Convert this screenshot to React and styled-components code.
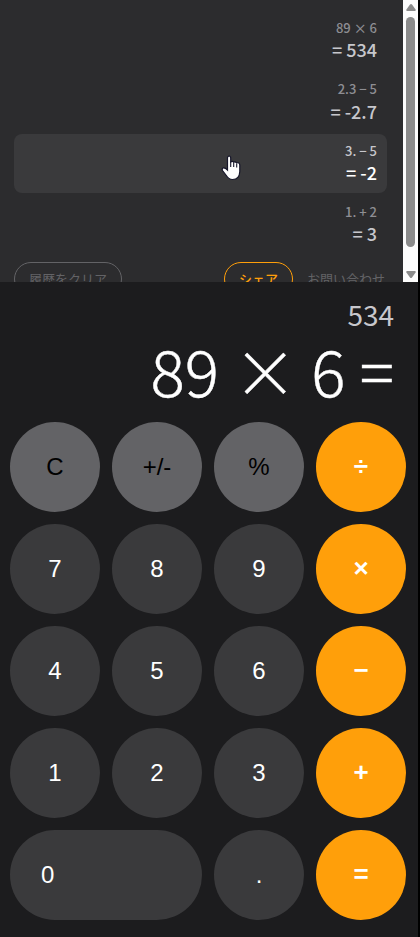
import React from "react";
import styled, { createGlobalStyle, css } from "styled-components";

const GlobalStyle = createGlobalStyle`
  * {
    box-sizing: border-box;
  }

  body {
    margin: 0;
    background: #000;
    overflow: hidden;
  }
`;

const Calculator = styled.div`
  width: 418px;
  height: 937px;
  display: flex;
  flex-direction: column;
  background: #1c1c1e;
  color: #fff;
  font-family: "Noto Sans CJK JP", sans-serif;
`;

const History = styled.section`
  height: 282px;
  display: flex;
  overflow: hidden;
  background: #2c2c2e;
`;

const HistoryContent = styled.div`
  flex: 1;
  padding: 11px 16px 0 14px;
`;

const HistoryList = styled.ul`
  margin: 0;
  padding: 0;
  display: flex;
  flex-direction: column;
  gap: 2px;
  list-style: none;
`;

const HistoryItem = styled.li`
  height: 59.4px;
  padding: 8px 10px;
  border-radius: 8px;
  text-align: right;
  font-weight: 500;
  color: ${(props) => (props.$active ? "#fff" : "#c7c7cc")};
  background: ${(props) => (props.$active ? "#3a3a3c" : "transparent")};

  .expression {
    font-size: 13px;
    line-height: 18px;
    color: ${(props) => (props.$active ? "#c7c7cc" : "#8e8e93")};
  }

  .result {
    padding-top: 0.2px;
    font-size: 18px;
    line-height: 24px;
  }
`;

const HistoryActions = styled.div`
  margin-top: 7px;
  display: flex;
  align-items: center;
`;

const PillButton = styled.button`
  height: 34px;
  width: ${(props) => (props.$accent ? "69px" : "108px")};
  margin-left: ${(props) => (props.$accent ? "auto" : "0")};
  padding: 0;
  border: 1px solid ${(props) => (props.$accent ? "#ff9f0a" : "#636366")};
  border-radius: 17px;
  background: transparent;
  color: ${(props) => (props.$accent ? "#ff9f0a" : "#636366")};
  font-family: inherit;
  font-size: 13px;
  font-weight: ${(props) => (props.$accent ? 500 : 400)};
`;

const ContactLink = styled.a`
  margin: 0 2px 0 14px;
  color: #636366;
  font-size: 13px;
`;

const Scrollbar = styled.div`
  width: 15px;
  padding: 4px 0;
  display: flex;
  flex-direction: column;
  align-items: center;
  background: #fcfcfc;

  svg {
    display: block;
    fill: #8b8b8b;
  }
`;

const Thumb = styled.div`
  width: 9px;
  height: 230px;
  margin: 6px 0 24px;
  border-radius: 5px;
  background: #8b8b8b;
`;

const Display = styled.section`
  height: 140px;
  padding: 12px 24px 0 0;
  text-align: right;
`;

const Preview = styled.div`
  font-size: 28px;
  line-height: 40px;
  color: #c7c7cc;
`;

const Formula = styled.div`
  font-size: 64px;
  line-height: 70px;
  font-weight: 300;
  -webkit-text-stroke: 0.4px #fff;
  white-space: nowrap;
`;

const Keypad = styled.div`
  padding: 0 12px 0 10px;
  display: grid;
  grid-template-columns: repeat(4, 90px);
  grid-auto-rows: 90px;
  gap: 12px;
`;

const Key = styled.button`
  padding: 0;
  border: none;
  border-radius: 45px;
  background: #3a3a3c;
  color: #fff;
  font-family: "Liberation Sans", Arial, sans-serif;
  font-size: 24px;

  ${(props) =>
    props.$kind === "function" &&
    css`
      background: #636366;
      color: #000;
    `}

  ${(props) =>
    props.$kind === "operator" &&
    css`
      padding-bottom: 2px;
      background: #ff9f0a;
      font-size: 26px;
      font-weight: 600;
    `}

  ${(props) =>
    props.$wide &&
    css`
      grid-column: span 2;
      padding-left: 31px;
      text-align: left;
    `}
`;

const Pointer = styled.svg`
  position: absolute;
  left: 221px;
  top: 155px;
  width: 20px;
  height: 26px;
`;

const history = [
  { expression: "89 × 6", result: "534" },
  { expression: "2.3 − 5", result: "-2.7" },
  { expression: "3. − 5", result: "-2", active: true },
  { expression: "1. + 2", result: "3" },
];

const keys = [
  { label: "C", kind: "function" },
  { label: "+/-", kind: "function" },
  { label: "%", kind: "function" },
  { label: "÷", kind: "operator" },
  { label: "7" },
  { label: "8" },
  { label: "9" },
  { label: "×", kind: "operator" },
  { label: "4" },
  { label: "5" },
  { label: "6" },
  { label: "−", kind: "operator" },
  { label: "1" },
  { label: "2" },
  { label: "3" },
  { label: "+", kind: "operator" },
  { label: "0", wide: true },
  { label: "." },
  { label: "=", kind: "operator" },
];

const App = () => {
  return (
    <>
      <GlobalStyle />
      <Calculator>
        <History>
          <HistoryContent>
            <HistoryList>
              {history.map((item) => (
                <HistoryItem key={item.expression} $active={item.active}>
                  <div className="expression">{item.expression}</div>
                  <div className="result">= {item.result}</div>
                </HistoryItem>
              ))}
            </HistoryList>
            <HistoryActions>
              <PillButton>履歴をクリア</PillButton>
              <PillButton $accent>シェア</PillButton>
              <ContactLink>お問い合わせ</ContactLink>
            </HistoryActions>
          </HistoryContent>

          <Scrollbar>
            <svg width="10" height="7" viewBox="0 0 10 7">
              <path d="M4 .6Q5-.6 6 .6L9.6 5.5Q10 7 9 7H1Q0 7 .4 5.5Z" />
            </svg>
            <Thumb />
            <svg width="10" height="7" viewBox="0 0 10 7">
              <path d="M4 6.4Q5 7.6 6 6.4L9.6 1.5Q10 0 9 0H1Q0 0 .4 1.5Z" />
            </svg>
          </Scrollbar>
        </History>

        <Display>
          <Preview>534</Preview>
          <Formula>89 × 6 =</Formula>
        </Display>

        <Keypad>
          {keys.map((key) => (
            <Key key={key.label} $kind={key.kind} $wide={key.wide}>
              {key.label}
            </Key>
          ))}
        </Keypad>
      </Calculator>

      <Pointer viewBox="0 0 20 26">
        <path
          d="M6.5 15V3.2Q6.5 1 8.1 1T9.7 3.2V7Q11.5 5.8 12.7 7.2Q14.5 6.3 15.6 7.9Q18.5 7.2 18.8 10V16.5Q18.5 24.5 11.5 24.5Q7.5 24.3 5.3 20.5L1.5 15.5Q.6 13.8 2.1 13Q4 12.5 6.5 15Z"
          fill="#fff"
          stroke="#16162a"
          strokeWidth="1.2"
        />
        <path
          d="M9.7 6.5V12M12.7 7.5V12M15.7 8.5V12.5"
          fill="none"
          stroke="#16162a"
          strokeWidth="1.1"
        />
      </Pointer>
    </>
  );
};

export default App;
